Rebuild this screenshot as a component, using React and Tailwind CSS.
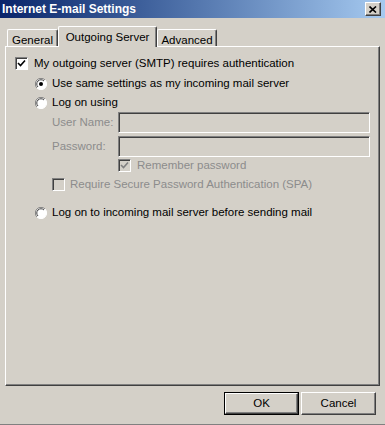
import React from "react";

const font = "font-['Liberation_Sans',Arial,sans-serif]";

const CheckBox = ({ checked, disabled }) => (
  <div
    className={`w-[13px] h-[13px] shrink-0 border-t border-l border-t-[#808080] border-l-[#808080] border-b border-r border-b-white border-r-white shadow-[inset_1px_1px_0_#404040] flex items-center justify-center ${
      disabled ? "bg-[#d4d0c8]" : "bg-white"
    }`}
  >
    {checked && (
      <svg width="9" height="9" viewBox="0 0 9 9">
        <path
          d="M1 4 L3.5 6.5 L8 1.5"
          fill="none"
          stroke={disabled ? "#808080" : "#000"}
          strokeWidth="1.6"
        />
      </svg>
    )}
  </div>
);

const Radio = ({ checked }) => (
  <svg width="12" height="12" viewBox="0 0 12 12" className="shrink-0">
    <circle cx="6" cy="6" r="5.5" fill="#fff" />
    <path d="M10 2 A5.5 5.5 0 0 0 2 10" fill="none" stroke="#808080" strokeWidth="1" />
    <path d="M9 3 A4.2 4.2 0 0 0 3 9" fill="none" stroke="#404040" strokeWidth="1" />
    <path d="M2 10 A5.5 5.5 0 0 0 10 2" fill="none" stroke="#fff" strokeWidth="1" />
    {checked && <circle cx="6" cy="6" r="2" fill="#000" />}
  </svg>
);

const Input = () => (
  <div className="flex-1 h-[21px] bg-[#d4d0c8] border-t border-l border-t-[#808080] border-l-[#808080] border-b border-r border-b-white border-r-white shadow-[inset_1px_1px_0_#404040,inset_-1px_-1px_0_#d4d0c8]" />
);

const Tab = ({ label, active, width }) => (
  <div
    className={`relative ${width} shrink-0 flex justify-center bg-[#d4d0c8] border-t border-l border-t-white border-l-white border-r border-r-[#404040] shadow-[inset_-1px_0_0_#808080] rounded-t-[2px] text-[11.5px] leading-[14px] text-black whitespace-nowrap ${
      active ? "h-[21px] -mb-px z-10 pt-[3px]" : "h-[17px] pt-[3px]"
    }`}
  >
    {label}
  </div>
);

export default function App() {
  return (
    <div className={`w-[385px] h-[425px] bg-[#d4d0c8] flex flex-col border-b border-b-[#808080] ${font}`}>
      {/* title bar */}
      <div className="h-[18px] bg-gradient-to-r from-[#0a246a] to-[#a6caf0] flex items-center justify-between pl-[2px] pr-[4px]">
        <span className="text-white font-bold text-[12px] leading-none">Internet E-mail Settings</span>
        <div className="w-[16px] h-[14px] bg-[#d4d0c8] border-t border-l border-t-white border-l-white border-b border-r border-b-[#404040] border-r-[#404040] shadow-[inset_-1px_-1px_0_#808080] flex items-center justify-center">
          <svg width="8" height="7" viewBox="0 0 8 7">
            <path d="M0.5 0.5 L7 6.5 M7 0.5 L0.5 6.5" stroke="#000" strokeWidth="1.6" />
          </svg>
        </div>
      </div>

      {/* tabs */}
      <div className="flex items-end pl-[7px] mt-[8px] h-[20px]">
        <Tab label="General" width="w-[51px]" />
        <Tab label="Outgoing Server" width="w-[99px]" active />
        <Tab label="Advanced" width="w-[60px]" />
      </div>

      {/* panel */}
      <div className="ml-[5px] w-[375px] h-[340px] border-t border-l border-t-white border-l-white border-b border-r border-b-[#404040] border-r-[#404040] shadow-[inset_-1px_-1px_0_#808080] pl-[9px] pt-[10px] text-[11.5px] leading-none">
        <div className="flex items-center gap-[6px] h-[13px]">
          <CheckBox checked />
          <span>My outgoing server (SMTP) requires authentication</span>
        </div>

        <div className="ml-[20px] mt-[7px] flex items-center gap-[5px] h-[13px]">
          <Radio checked />
          <span>Use same settings as my incoming mail server</span>
        </div>
        <div className="ml-[20px] mt-[6px] flex items-center gap-[5px] h-[13px]">
          <Radio />
          <span>Log on using</span>
        </div>

        <div className="ml-[37px] mr-[9px] text-[#8c8c8c]">
          <div className="mt-[3px] flex items-center">
            <span className="w-[66px]">User Name:</span>
            <Input />
          </div>
          <div className="mt-[3px] flex items-center">
            <span className="w-[66px]">Password:</span>
            <Input />
          </div>
          <div className="mt-[2px] ml-[66px] flex items-center gap-[6px] h-[13px]">
            <CheckBox checked disabled />
            <span>Remember password</span>
          </div>
          <div className="mt-[6px] flex items-center gap-[5px] h-[13px]">
            <CheckBox disabled />
            <span>Require Secure Password Authentication (SPA)</span>
          </div>
        </div>

        <div className="ml-[20px] mt-[15px] flex items-center gap-[5px] h-[13px]">
          <Radio />
          <span>Log on to incoming mail server before sending mail</span>
        </div>
      </div>

      {/* buttons */}
      <div className="flex justify-end gap-[2px] pr-[9px] mt-[6px] text-[11.5px]">
        <div className="w-[75px] h-[23px] border border-black">
          <div className="w-full h-full border-t border-l border-t-white border-l-white border-b border-r border-b-[#404040] border-r-[#404040] shadow-[inset_-1px_-1px_0_#808080] flex items-center justify-center">
            OK
          </div>
        </div>
        <div className="w-[75px] h-[23px] border-t border-l border-t-white border-l-white border-b border-r border-b-[#404040] border-r-[#404040] shadow-[inset_-1px_-1px_0_#808080] flex items-center justify-center">
          Cancel
        </div>
      </div>
    </div>
  );
}
